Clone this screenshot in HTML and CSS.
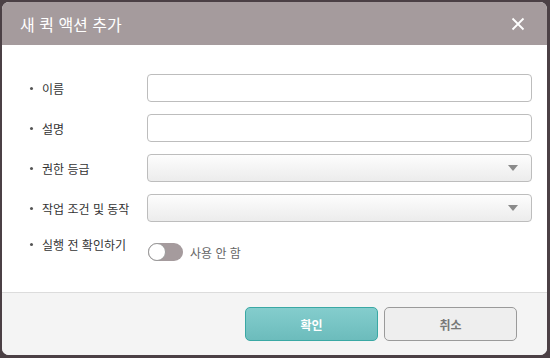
FILE: index.html
```html
<!doctype html>
<html lang="ko">
<head>
  <meta charset="UTF-8">
  <title>새 퀵 액션 추가</title>
  <link rel="stylesheet" href="styles.css">
</head>
<body>
  <div class="dialog">
    <div class="dialog-header">
      <span class="dialog-title">새 퀵 액션 추가</span>
      <button type="button" class="close-btn" aria-label="닫기">
        <svg width="14" height="14" viewBox="0 0 14 14">
          <path d="M1.5 1.5 L12.5 12.5 M12.5 1.5 L1.5 12.5" stroke="#fff" stroke-width="1.8" fill="none"/>
        </svg>
      </button>
    </div>
    <div class="dialog-body">
      <div class="form-row">
        <label class="form-label">이름</label>
        <input type="text" class="text-input">
      </div>
      <div class="form-row">
        <label class="form-label">설명</label>
        <input type="text" class="text-input">
      </div>
      <div class="form-row">
        <label class="form-label">권한 등급</label>
        <div class="select-box"><span class="caret"></span></div>
      </div>
      <div class="form-row">
        <label class="form-label">작업 조건 및 동작</label>
        <div class="select-box"><span class="caret"></span></div>
      </div>
      <div class="form-row toggle-row">
        <label class="form-label">실행 전 확인하기</label>
        <div class="toggle-wrap">
          <span class="toggle"><span class="knob"></span></span>
          <span class="toggle-text">사용 안 함</span>
        </div>
      </div>
    </div>
    <div class="dialog-footer">
      <button type="button" class="btn btn-primary">확인</button>
      <button type="button" class="btn btn-cancel">취소</button>
    </div>
  </div>
</body>
</html>
```

FILE: styles.css
```css
body {
  margin: 0;
  background: #4b4045;
  font-family: "Noto Sans CJK KR", "Noto Sans", sans-serif;
}
.dialog {
  margin: 2px 3px 3px 2px;
  height: 353px;
  background: #fff;
  border-radius: 7px;
  overflow: hidden;
  display: flex;
  flex-direction: column;
}
.dialog-header {
  height: 43px;
  background: #a59b9d;
  display: flex;
  align-items: center;
  justify-content: space-between;
  padding: 0 22px 0 18px;
}
.dialog-title {
  color: #fff;
  font-size: 16px;
}
.close-btn {
  background: none;
  border: none;
  padding: 0;
  display: flex;
}
.dialog-body {
  height: 247px;
  padding: 29px 0 0 28px;
  box-sizing: border-box;
}
.form-row {
  display: flex;
  align-items: center;
  margin-bottom: 12px;
}
.form-label {
  width: 117px;
  font-size: 12px;
  color: #333;
  display: flex;
  align-items: center;
}
.form-label::before {
  content: '';
  width: 3px;
  height: 3px;
  border-radius: 50%;
  background: #555;
  margin-right: 9px;
}
.text-input,
.select-box {
  width: 385px;
  height: 28px;
  box-sizing: border-box;
  border: 1px solid #bdbdbd;
  border-radius: 4px;
  background: #fff;
  margin: 0;
}
.select-box {
  background: linear-gradient(#fdfdfd, #ececec);
  display: flex;
  align-items: center;
  justify-content: flex-end;
  padding-right: 13px;
}
.caret {
  width: 0;
  height: 0;
  border-left: 5px solid transparent;
  border-right: 5px solid transparent;
  border-top: 6px solid #8a8a8a;
}
.toggle-row {
  align-items: flex-start;
  padding-top: 2px;
}
.toggle-wrap {
  display: flex;
  align-items: center;
  margin-top: 7px;
}
.toggle {
  width: 35px;
  height: 18px;
  border-radius: 9px;
  background: #a59b9d;
  position: relative;
  margin-left: 1px;
}
.knob {
  position: absolute;
  left: 0;
  top: 0;
  width: 18px;
  height: 18px;
  box-sizing: border-box;
  border-radius: 50%;
  background: #fff;
  border: 1px solid #999;
}
.toggle-text {
  font-size: 12px;
  color: #666;
  margin-left: 7px;
}
.dialog-footer {
  flex: 1;
  background: #f4f4f4;
  border-top: 1px solid #dcdcdc;
  display: flex;
  justify-content: flex-end;
  align-items: flex-start;
  padding: 14px 30px 0 0;
  gap: 6px;
}
.btn {
  width: 133px;
  height: 34px;
  border-radius: 5px;
  font-family: inherit;
  font-size: 12px;
  font-weight: 700;
}
.btn-primary {
  background: linear-gradient(#84cdcd, #6cbcbc);
  border: 1px solid #3aa8a4;
  color: #fff;
}
.btn-cancel {
  background: #eeeeee;
  border: 1px solid #9a9a9a;
  color: #777;
}
```
